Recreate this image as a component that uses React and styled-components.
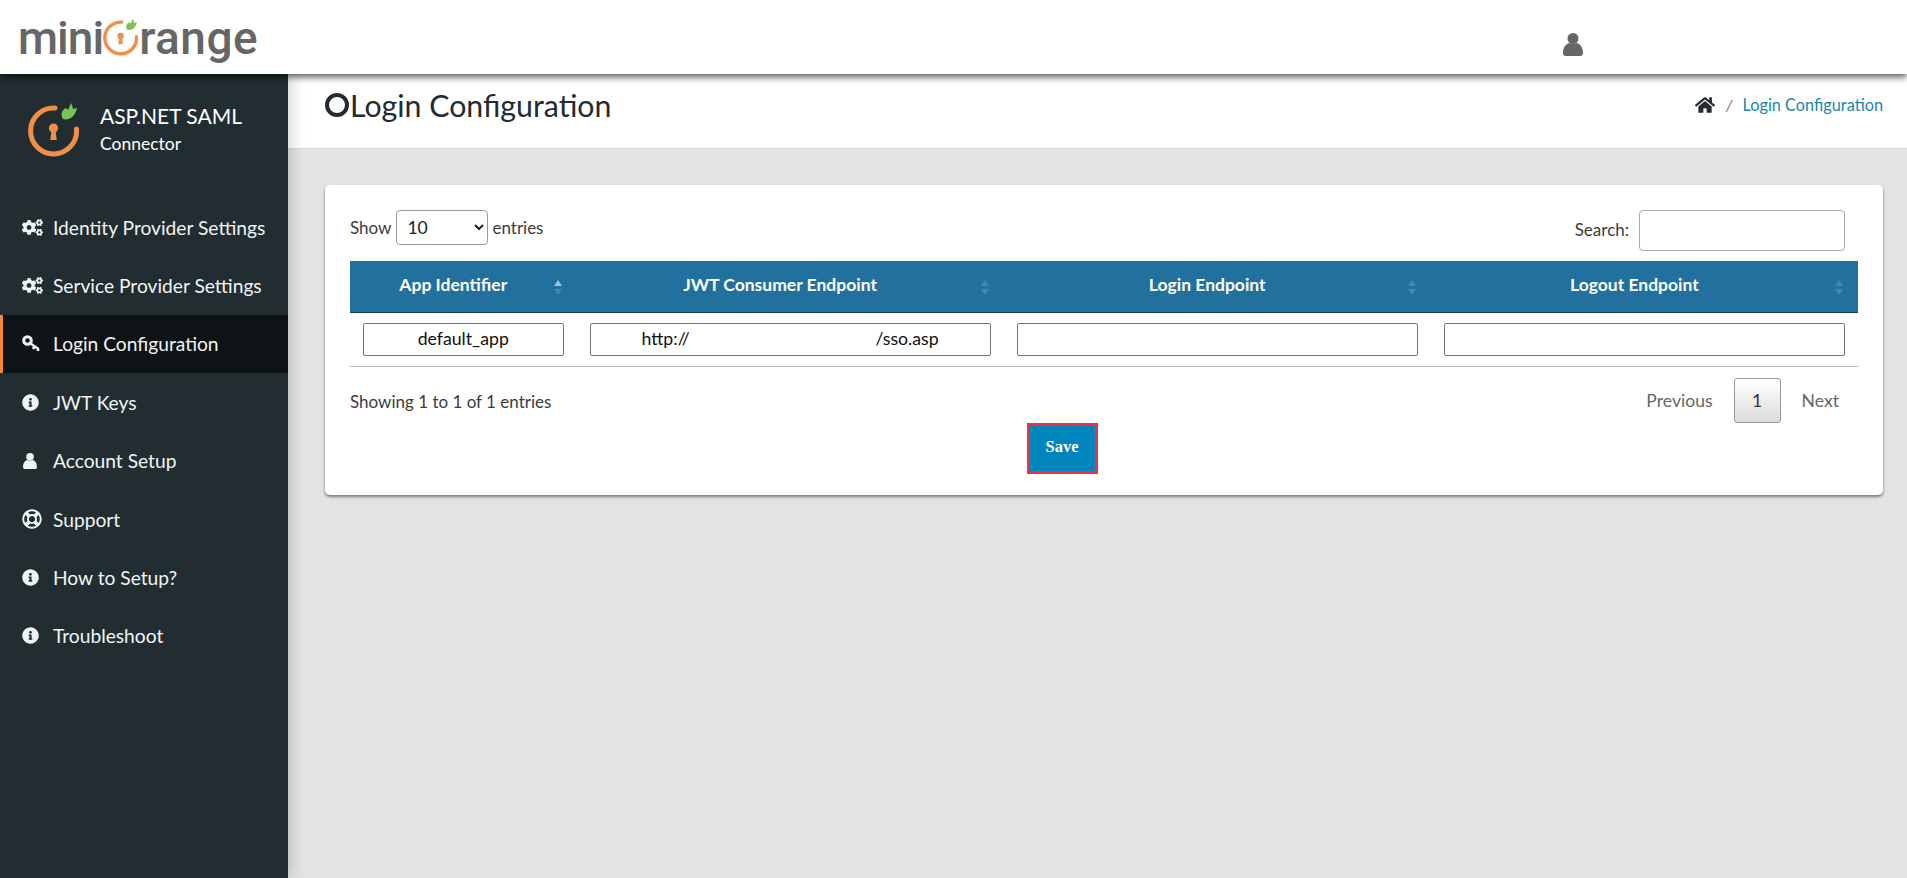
import React from "react";
import styled, { createGlobalStyle } from "styled-components";
import { FaCogs, FaInfoCircle, FaRegLifeRing, FaHome } from "react-icons/fa";

const GlobalStyle = createGlobalStyle`
    html, body {
        margin: 0;
        padding: 0;
        height: 100%;
        background: #e3e3e3;
        font-family: "Lato", "Liberation Sans", sans-serif;
        color: #333;
    }
    * {
        box-sizing: border-box;
    }
`

const Page = styled.div`
    display: flex;
    flex-direction: column;
    height: 878px;
    overflow: hidden;
`

const Header = styled.header`
    position: relative;
    z-index: 3;
    flex: 0 0 74px;
    display: flex;
    align-items: flex-start;
    background: #fff;
    box-shadow: 0 3px 7px rgba(0, 0, 0, 0.65);
`

const Logo = styled.div`
    display: flex;
    align-items: flex-start;
    margin: 18px 0 0 18px;
    width: 1545px;
    height: 45px;
    color: #666;
    font-family: "Roboto", sans-serif;
    font-size: 46px;
    font-weight: 500;
    line-height: 40px;

    svg {
        flex: 0 0 auto;
    }
`

const LogoWord = styled.span`
    letter-spacing: ${props => props.$spacing}px;
`

const HeaderUser = styled.svg`
    margin-top: 33px;
    width: 20px;
    height: 23px;
    fill: #666;
`

const Body = styled.div`
    flex: 1;
    display: flex;
    min-height: 0;
`

const Sidebar = styled.aside`
    position: relative;
    z-index: 2;
    flex: 0 0 288px;
    background: #222d32;
    box-shadow: 3px 0 14px rgba(0, 0, 0, 0.18);
`

const Brand = styled.div`
    display: flex;
    align-items: flex-start;
    height: 124px;
    padding: 28px 0 0 28px;
    color: #fff;
`

const BrandText = styled.div`
    margin-left: 20px;
    padding-top: 2px;

    strong {
        display: block;
        font-size: 21px;
        font-weight: 400;
        line-height: 24px;
    }

    span {
        display: block;
        margin-top: 4px;
        font-size: 17.5px;
        line-height: 24px;
    }
`

const NavItem = styled.a`
    display: flex;
    align-items: center;
    height: 58.4px;
    padding-left: ${props => (props.$active ? "19px" : "22px")};
    border-left: ${props => (props.$active ? "3px solid #f58634" : "0")};
    background: ${props => (props.$active ? "#0e1315" : "transparent")};
    color: #f2f4f4;
    font-size: 19.2px;
`

const NavIcon = styled.span`
    flex: 0 0 31px;
    display: flex;
    align-items: center;

    svg {
        width: ${props => props.$size || 17}px;
        height: ${props => props.$size || 17}px;
    }
`

const Main = styled.main`
    flex: 1;
    min-width: 0;
`

const TitleBar = styled.div`
    display: flex;
    justify-content: space-between;
    align-items: center;
    height: 75px;
    padding: 0 24px 13px 37px;
    background: #fff;
    border-bottom: 1px solid #d8d8d8;
`

const Title = styled.h1`
    display: flex;
    align-items: center;
    gap: 1px;
    margin: 0;
    color: #212b31;
    font-size: 30.3px;
    font-weight: 400;
`

const Ring = styled.span`
    width: 24px;
    height: 24px;
    border: 4px solid #212b31;
    border-radius: 50%;
`

const Crumbs = styled.nav`
    display: flex;
    align-items: center;
    font-size: 16.3px;
    color: #1c86ae;

    svg {
        width: 20px;
        height: 18px;
        color: #212b31;
    }

    i {
        margin: 0 10px 0 11px;
        color: #777;
    }
`

const Content = styled.div`
    padding: 36px 24px 0 37px;
`

const Card = styled.section`
    height: 310px;
    padding: 25px 25px 0;
    background: #fff;
    border-radius: 5px;
    box-shadow: 0 2px 3px rgba(0, 0, 0, 0.45);
    font-size: 17px;
`

const TopRow = styled.div`
    display: flex;
    justify-content: space-between;
    align-items: flex-start;
    height: 51px;
    padding-right: 13px;
`

const Label = styled.label`
    display: flex;
    align-items: center;
    gap: 4px;
    height: ${props => props.$height}px;
    color: #3c3c3c;
`

const PageSize = styled.select`
    width: 92px;
    height: 35px;
    margin-left: 1px;
    padding-left: 6px;
    background: #fff;
    border: 1px solid #999;
    border-radius: 4px;
    color: #212121;
    font: 17.5px "Lato", sans-serif;
`

const SearchBox = styled.input`
    align-self: flex-start;
    width: 206px;
    height: 41px;
    margin-left: 6px;
    border: 1px solid #aaa;
    border-radius: 4px;
`

const Table = styled.table`
    width: 100%;
    table-layout: fixed;
    border-collapse: collapse;
`

const HeadCell = styled.th`
    position: relative;
    height: 51px;
    padding: 0 30px 3px 10px;
    background: #22709e;
    border-bottom: 1px solid #123f5c;
    color: #fff;
    font-size: 17.5px;
    font-weight: 700;
    text-align: center;
`

const SortMark = styled.span`
    position: absolute;
    right: 15px;
    top: 19px;
    display: flex;
    flex-direction: column;
    gap: 3px;

    &::before, &::after {
        content: "";
        border-left: 4px solid transparent;
        border-right: 4px solid transparent;
    }

    &::before {
        border-bottom: 6px solid ${props => (props.$on ? "#9cc3d8" : "#3f8ab0")};
    }

    &::after {
        border-top: 6px solid #3f8ab0;
    }
`

const Cell = styled.td`
    height: 54px;
    padding: 0 13px;
    border-bottom: 1px solid #bbb;
`

const CellInput = styled.input`
    display: block;
    width: 100%;
    height: 33px;
    padding: 0 8px 2px;
    background: #fff;
    border: 1px solid #767676;
    border-radius: 2px;
    color: #111;
    font: 17.7px "Lato", sans-serif;
    text-align: center;
`

const Footer = styled.div`
    display: flex;
    justify-content: space-between;
    align-items: flex-start;
    height: 56px;
    padding-top: 12px;
    color: #3c3c3c;
`

const Info = styled.div`
    padding-top: 12px;
`

const Pager = styled.div`
    display: flex;
    align-items: center;
    height: 45px;
    padding: 0 19px 1px 0;
    color: #666;
    font-size: 17.6px;
`

const PageButton = styled.span`
    display: flex;
    align-items: center;
    justify-content: center;
    width: 47px;
    height: 45px;
    margin: 0 21px;
    background: linear-gradient(#fff, #dcdcdc);
    border: 1px solid #979797;
    border-radius: 3px;
    color: #333;
`

const SaveRow = styled.div`
    display: flex;
    justify-content: center;
    padding-right: 84px;
`

const SaveButton = styled.button`
    width: 71px;
    height: 51px;
    padding: 0 0 2px;
    background: #0085bc;
    border: 3px solid #e8343f;
    color: #fff;
    font: bold 16.5px "Liberation Serif", serif;
`

function OrangeMark({ width, height }) {
    return (
        <svg width={width} height={height} viewBox="0 0 52 58">
            <path d="M27 6A23 23 0 1 0 48.5 27" fill="none" stroke="#f28f46" strokeWidth="5" strokeLinecap="round" />
            <circle cx="25.5" cy="26" r="4.6" fill="#f28f46" />
            <path d="M23.6 28h3.8l1.4 10h-6.6z" fill="#f28f46" />
            <path d="M35 17c-3-5-1-9 3-11l2 2 3-7c2 4 2 6 2 6l4-1c-1 7-7 13-14 11z" fill="#7cc254" />
        </svg>
    );
}

const userPath = "M0 20c0-6 3-9 6-10 1.2 1 6.8 1 8 0 3 1 6 4 6 10 0 2-1 3-3 3H3c-2 0-3-1-3-3z";

function UserGlyph() {
    return (
        <svg viewBox="0 0 20 23" fill="currentColor">
            <circle cx="10" cy="5.5" r="5.5" />
            <path d={userPath} />
        </svg>
    );
}

function KeyGlyph() {
    return (
        <svg viewBox="0 0 18 18" fill="none" stroke="currentColor">
            <circle cx="5.5" cy="5.5" r="3.8" strokeWidth="3" />
            <path d="M8.5 8.5l8 5.5M12.5 11.5l-1.5 2.5M16 13.5l0 2.5" strokeWidth="2.6" />
        </svg>
    );
}

const navItems = [
    { label: "Identity Provider Settings", icon: <FaCogs />, size: 21 },
    { label: "Service Provider Settings", icon: <FaCogs />, size: 21 },
    { label: "Login Configuration", icon: <KeyGlyph />, size: 18, active: true },
    { label: "JWT Keys", icon: <FaInfoCircle /> },
    { label: "Account Setup", icon: <UserGlyph />, size: 16 },
    { label: "Support", icon: <FaRegLifeRing />, size: 20 },
    { label: "How to Setup?", icon: <FaInfoCircle /> },
    { label: "Troubleshoot", icon: <FaInfoCircle /> },
];

const gap = " ".repeat(41);

const columns = [
    { title: "App Identifier", width: "226.5px", value: "default_app", on: true },
    { title: "JWT Consumer Endpoint", value: `http://${gap}/sso.asp` },
    { title: "Login Endpoint", value: "" },
    { title: "Logout Endpoint", value: "" },
];

export default function App() {
    return (
        <>
            <GlobalStyle />
            <Page>
                <Header>
                    <Logo>
                        <LogoWord $spacing={-1}>mini</LogoWord>
                        <OrangeMark width={36} height={40} />
                        <LogoWord $spacing={0.5}>range</LogoWord>
                    </Logo>
                    <HeaderUser viewBox="0 0 20 23">
                        <circle cx="10" cy="5.5" r="5.5" />
                        <path d={userPath} />
                    </HeaderUser>
                </Header>
                <Body>
                    <Sidebar>
                        <Brand>
                            <OrangeMark width={52} height={58} />
                            <BrandText>
                                <strong>ASP.NET SAML</strong>
                                <span>Connector</span>
                            </BrandText>
                        </Brand>
                        {navItems.map(item => (
                            <NavItem key={item.label} $active={item.active}>
                                <NavIcon $size={item.size}>{item.icon}</NavIcon>
                                {item.label}
                            </NavItem>
                        ))}
                    </Sidebar>
                    <Main>
                        <TitleBar>
                            <Title><Ring />Login Configuration</Title>
                            <Crumbs>
                                <FaHome />
                                <i>/</i>
                                Login Configuration
                            </Crumbs>
                        </TitleBar>
                        <Content>
                            <Card>
                                <TopRow>
                                    <Label $height={35}>
                                        Show
                                        <PageSize defaultValue="10">
                                            <option>10</option>
                                            <option>25</option>
                                            <option>50</option>
                                            <option>100</option>
                                        </PageSize>
                                        entries
                                    </Label>
                                    <Label $height={39}>
                                        Search:
                                        <SearchBox />
                                    </Label>
                                </TopRow>
                                <Table>
                                    <colgroup>
                                        {columns.map(col => <col key={col.title} style={{ width: col.width }} />)}
                                    </colgroup>
                                    <thead>
                                        <tr>
                                            {columns.map(col => (
                                                <HeadCell key={col.title}>
                                                    {col.title}
                                                    <SortMark $on={col.on} />
                                                </HeadCell>
                                            ))}
                                        </tr>
                                    </thead>
                                    <tbody>
                                        <tr>
                                            {columns.map(col => (
                                                <Cell key={col.title}>
                                                    <CellInput defaultValue={col.value} />
                                                </Cell>
                                            ))}
                                        </tr>
                                    </tbody>
                                </Table>
                                <Footer>
                                    <Info>Showing 1 to 1 of 1 entries</Info>
                                    <Pager>
                                        Previous
                                        <PageButton>1</PageButton>
                                        Next
                                    </Pager>
                                </Footer>
                                <SaveRow>
                                    <SaveButton>Save</SaveButton>
                                </SaveRow>
                            </Card>
                        </Content>
                    </Main>
                </Body>
            </Page>
        </>
    );
}
